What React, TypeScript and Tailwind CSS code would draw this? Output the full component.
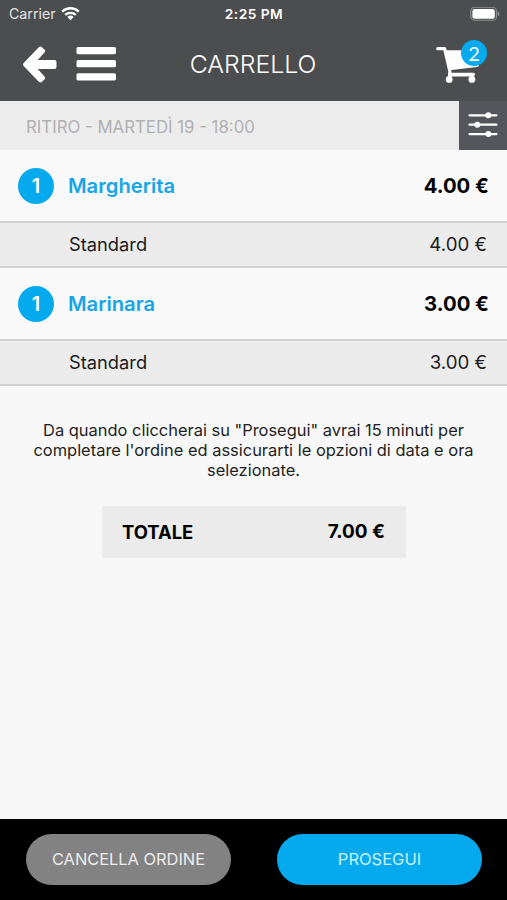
import React from "react";

type Item = { qty: number; name: string; price: string; variant: string; variantPrice: string };

const items: Item[] = [
  { qty: 1, name: "Margherita", price: "4.00 €", variant: "Standard", variantPrice: "4.00 €" },
  { qty: 1, name: "Marinara", price: "3.00 €", variant: "Standard", variantPrice: "3.00 €" },
];

function WifiIcon() {
  return (
    <svg width="19" height="15" viewBox="0 0 19 15" fill="none" stroke="#fff" strokeWidth="2.3">
      <path d="M1.2 4.6a12 12 0 0 1 16.6 0" />
      <path d="M4.2 7.9a7.7 7.7 0 0 1 10.6 0" />
      <path d="M9.5 13.2 6.4 10a4.500 4.500 0 0 1 6.200 0Z" fill="#fff" stroke="none" />
    </svg>
  );
}

function BatteryIcon() {
  return (
    <svg width="31" height="15" viewBox="0 0 31 15">
      <rect x="0.8" y="0.3" width="25.6" height="13" rx="3.8" fill="none" stroke="#909193" strokeWidth="1.1" />
      <rect x="2.4" y="1.9" width="22.4" height="9.8" rx="2.3" fill="#fff" />
      <path d="M27.6 4.500v4.600c1.200-.4 2-1.200 2-2.300s-.8-1.900-2-2.300Z" fill="#909193" />
    </svg>
  );
}

function BackIcon() {
  return (
    <svg width="34" height="37" viewBox="0 0 34 37">
      <path
        d="M.9 16.7 15.8 1.300q1.500-1.500 3.100-.1l2.500 2.300q1.500 1.500.1 3.100L14.700 14H31.200q2.300 0 2.300 2.300v4.400q0 2.300-2.300 2.300H14.700l6.800 7.400q1.400 1.600-.1 3.100l-2.500 2.300q-1.600 1.400-3.100-.1L.9 20.300q-1.800-1.800 0-3.600Z"
        fill="#fff"
      />
    </svg>
  );
}

function MenuIcon() {
  return (
    <svg width="40" height="34" viewBox="0 0 40 34" fill="#fff">
      <rect x="0.5" y="0" width="39.5" height="7.2" rx="1.6" />
      <rect x="0.5" y="13.1" width="39.5" height="7.2" rx="1.6" />
      <rect x="0.5" y="26.2" width="39.5" height="7.2" rx="1.6" />
    </svg>
  );
}

function CartIcon() {
  return (
    <svg width="44" height="37" viewBox="0 0 44 37" fill="none" stroke="#fff">
      <path d="M1.8 2.700H8.600L13.800 25v8" strokeWidth="3.200" strokeLinecap="round" strokeLinejoin="round" />
      <path d="M9.300 4.300H36L43 19.500Q42.500 20.600 41 20.900L13.500 24.200Z" fill="#fff" stroke="none" />
      <path d="M13.800 28.600H37.200" strokeWidth="3.600" strokeLinecap="round" />
      <circle cx="13.200" cy="33.400" r="3.400" fill="#fff" stroke="none" />
      <circle cx="35.900" cy="33.400" r="3.400" fill="#fff" stroke="none" />
    </svg>
  );
}

function SlidersIcon() {
  return (
    <svg width="30" height="26" viewBox="0 0 30 26" fill="#fff" stroke="#fff" strokeWidth="2.2" strokeLinecap="round">
      <path d="M1.500 3.300h27M1.500 12.700h27M1.500 22.100h27" />
      <circle cx="20.300" cy="3.300" r="3" stroke="none" />
      <circle cx="9.300" cy="12.700" r="3" stroke="none" />
      <circle cx="20.300" cy="22.100" r="3" stroke="none" />
    </svg>
  );
}

function CartRow({ item }: { item: Item }) {
  return (
    <li>
      <div className="flex h-[71px] items-center bg-[#f9f9f9] px-[18px] leading-6 font-semibold">
        <span className="flex size-9 items-center justify-center rounded-full bg-[#04aaed] text-xl text-white">
          {item.qty}
        </span>
        <span className="ml-[14px] text-[20.2px] text-[#16a5e6]">{item.name}</span>
        <span className="ml-auto text-[20.3px] font-bold text-black">{item.price}</span>
      </div>
      <div className="flex h-[47px] items-center justify-between border-y-2 border-[#d0d0d0] bg-[#ebebeb] pt-px pr-5 pl-[69px] text-[#1b1b1b]">
        <span className="text-[18.3px]">{item.variant}</span>
        <span className="text-[18.7px]">{item.variantPrice}</span>
      </div>
    </li>
  );
}

export default function App() {
  return (
    <div className="flex h-[900px] w-[507px] flex-col overflow-hidden bg-[#f7f7f7] font-['Inter',sans-serif]">
      <header className="h-[101px] shrink-0 bg-[#4c4d4f] text-white">
        <div className="grid h-7 grid-cols-3 items-center pr-[6px] pl-[9px] text-sm leading-4">
          <div className="flex items-center gap-[5px] text-[#e4e4e4]">
            <span className="text-[14.2px]">Carrier</span>
            <WifiIcon />
          </div>
          <span className="pr-[2px] text-center text-[13.7px] font-semibold tracking-[0.5px]">2:25 PM</span>
          <div className="flex justify-end">
            <BatteryIcon />
          </div>
        </div>
        <div className="grid h-[73px] grid-cols-3 items-center pr-[20px] pl-[23px]">
          <div className="flex items-center gap-[19px]">
            <BackIcon />
            <div className="pb-0.5">
              <MenuIcon />
            </div>
          </div>
          <h1 className="pr-[4px] text-center text-[24.8px] font-light">CARRELLO</h1>
          <div className="flex justify-end">
            <div className="relative mr-[7px]">
              <CartIcon />
              <span className="absolute -top-[6px] left-[25px] flex size-[26px] items-center justify-center rounded-full bg-[#04aaed] font-['Lato',sans-serif] text-[20px] leading-none">
                2
              </span>
            </div>
          </div>
        </div>
      </header>

      <div className="flex h-[49px] shrink-0 bg-[#ececec]">
        <div className="flex flex-1 items-center pt-[4px] pl-[26px] text-[16.8px] text-[#b0b0b2]">
          RITIRO - MARTEDÌ 19 - 18:00
        </div>
        <button className="flex w-12 items-center justify-center bg-[#55555c] pb-px">
          <SlidersIcon />
        </button>
      </div>

      <main className="flex flex-1 flex-col">
        <ul>
          {items.map((item) => (
            <CartRow key={item.name} item={item} />
          ))}
        </ul>
        <p className="mt-[34px] text-center text-[16.45px] leading-[20.2px] text-[#1f1f1f]">
          Da quando cliccherai su "Prosegui" avrai 15 minuti per
          <br />
          completare l'ordine ed assicurarti le opzioni di data e ora
          <br />
          selezionate.
        </p>
        <div className="mt-[25px] ml-[102px] flex h-[52px] w-[304px] items-center justify-between bg-[#ebebeb] pt-[2px] pr-[21px] pl-[20px] font-bold text-black">
          <span className="text-[18.4px]">TOTALE</span>
          <span className="text-[18.9px]">7.00 €</span>
        </div>
      </main>

      <footer className="flex h-[81px] shrink-0 items-center justify-between bg-black pr-[25px] pl-[26px]">
        <button className="h-[51px] w-[205px] rounded-full bg-[#828282] text-[16.4px] text-[#ececec]">CANCELLA ORDINE</button>
        <button className="h-[51px] w-[205px] rounded-full bg-[#04aaed] text-[16.5px] text-[#c9f2ff]">PROSEGUI</button>
      </footer>
    </div>
  );
}
